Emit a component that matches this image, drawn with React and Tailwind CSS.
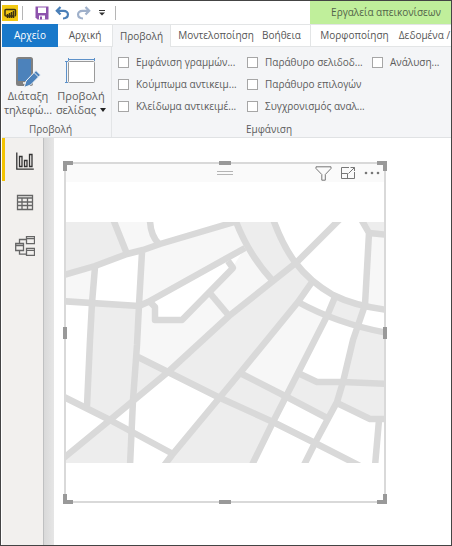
const TABS = [
  { id: 'home', label: 'Αρχική', style: 'w-[54px] shrink-0 border-b' },
  { id: 'view', label: 'Προβολή', style: 'w-[59px] shrink-0 border-x bg-[#f4f5f7]' },
  { id: 'modeling', label: 'Μοντελοποίηση', style: 'w-[90px] shrink-0 border-b' },
  { id: 'help', label: 'Βοήθεια', style: 'w-[49px] shrink-0 border-b pr-2' },
  { id: 'format', label: 'Μορφοποίηση', style: 'w-[88px] shrink-0 border-b border-l' },
  { id: 'data', label: 'Δεδομένα /', style: 'min-w-[53px] border-b' },
];

const SHOW_OPTIONS = [
  ['Εμφάνιση γραμμών...', 'Κούμπωμα αντικειμ...', 'Κλείδωμα αντικειμέ...'],
  ['Παράθυρο σελιδοδ...', 'Παράθυρο επιλογών', 'Συγχρονισμός αναλ...'],
  ['Ανάλυση...'],
];

/* City blocks, darker and lighter shade */
const DARK_BLOCKS = [
  '65,222 114,222 127,254 65,274',
  '92,303 139,305 137,340 133,400 110,420 87,405',
  '65,457 110,420 132,431 130,463 65,463',
  '138,357 168,372 134,400',
  '237,222 275,222 284,243 297,262 272,280 245,248',
  '168,372 229,316 297,262 310,280 298,302 240,373 218,398',
  '363,222 385,222 385,234 369,233',
  '335,297 363,305 356,327 327,316',
  '356,327 385,333 385,384 343,382',
  '298,373 317,382 343,382 337,402 327,418 287,397',
  '343,382 385,384 385,419 370,419 337,403',
  '240,373 287,397 273,422 220,398',
  '218,398 273,422 253,463 167,463',
];

const LIGHT_BLOCKS = [
  '114,222 150,222 151,233 159,244 127,254',
  '65,275 95,267 93,303 65,301',
  '142,252 237,222 245,248 148,302 139,305',
  '139,305 148,302 155,308 155,320 182,320 232,268 245,248 272,280 229,316 168,372 138,357',
  '369,233 385,234 385,310 365,305',
  '298,302 327,316 310,348 298,373 287,397 240,373',
];

const ROADS = [
  'M60 276 L95 266 L127 254 L143 250 L160 244 L238 221',
  'M113 219 L127 254',
  'M150 219 Q150 235 159 244',
  'M95 267 L92 303 L90 340 L87 406',
  'M142 252 L139 305 L137 345 L133 400 L130 466',
  'M60 301 L139 306 L148 302 L245 248',
  'M149 301 L155 307 L155 320 L182 320 L233 268 L228 261',
  'M209 292 L230 317',
  'M60 461 L110 420 L168 372 L229 316 L297 262 L340 219',
  'M235 219 Q248 254 272 280',
  'M273 219 C285 252 300 276 333 295 Q355 306 388 310',
  'M361 219 L369 233 L365 305 L353 340 L343 382 L337 402 L315 443 L303 467',
  'M369 233 L388 235',
  'M298 302 Q338 324 388 333',
  'M312 282 L298 302 L240 373 L172 455 L163 467',
  'M335 297 L327 316 L298 373 L273 422 L251 467',
  'M240 373 L287 397 L327 418',
  'M138 357 L168 372 L218 397 L273 422 L315 443 L362 467',
  'M298 373 L317 382 L343 382 L388 384',
  'M337 403 L370 419 L388 419',
  'M379 420 L375 466',
  'M60 395 L110 420 L173 454',
];

function QuickAccess() {
  return (
    <div className="flex h-full items-center">
      <span className="flex h-4 w-4 items-center justify-center bg-[#f2c811]">
        <svg viewBox="0 0 14 12" className="h-3 w-3.5">
          <path d="M10 9H3a1 1 0 0 1-1-1V3.500a1 1 0 0 1 1-1h8.500a1 1 0 0 1 1 1V8a1 1 0 0 1-1 1" fill="none" stroke="#3b3213" strokeWidth="1.500" />
          <path d="M4.500 11V7M6.500 11V6M8.500 11V5M10.500 11V4" stroke="#3b3213" strokeWidth="1.500" />
        </svg>
      </span>
      <span className="ml-1 h-3.5 w-px bg-[#b5b5b5]" />
      <button type="button" aria-label="Αποθήκευση" className="ml-3">
        <svg viewBox="0 0 14 14" className="h-3.5 w-3.5">
          <path d="M.5.500h13v13H2.500L.5 11.500z" fill="#8d53ad" />
          <path d="M3 1.500h8V7H3zM4 9.500h6v4H4z" fill="#fff" />
          <path d="M5 10.500h2v3H5z" fill="#8d53ad" />
        </svg>
      </button>
      <button type="button" aria-label="Αναίρεση" className="ml-1.5">
        <svg viewBox="0 0 15 14" className="h-3.5 w-[15px]" fill="none" stroke="#4a7fb8" strokeWidth="2.200">
          <path d="M5.500 1L1.800 4.800l3.700 3.700M2 4.800h6.500c6 0 6 7.500-.5 7.700" />
        </svg>
      </button>
      <button type="button" aria-label="Επανάληψη" className="ml-1.5">
        <svg viewBox="0 0 15 14" className="h-3.5 w-[15px]" fill="none" stroke="#9fb0ca" strokeWidth="2.200">
          <path d="M9.500 1l3.700 3.800-3.700 3.700M13 4.800H6.500c-6 0-6 7.500.5 7.700" />
        </svg>
      </button>
      <button type="button" aria-label="Προσαρμογή" className="ml-2">
        <svg viewBox="0 0 6 6" className="h-1.5 w-1.5">
          <path d="M0 .5h6" stroke="#333" />
          <path d="M0 2.500h6L3 5.500z" fill="#333" />
        </svg>
      </button>
      <span className="ml-2.5 h-3.5 w-px bg-[#b5b5b5]" />
    </div>
  );
}

function TitleBar() {
  return (
    <header className="flex h-[23px] items-center justify-between bg-white">
      <QuickAccess />
      <div className="flex h-full w-[141px] items-center justify-end bg-[#c0ef9b] pr-2.5 text-[10px] text-[#53634a]">
        Εργαλεία απεικονίσεων
      </div>
    </header>
  );
}

function TabStrip() {
  return (
    <nav className="flex h-[23px] bg-white text-[10px] text-[#555]">
      <button type="button" className="w-14 shrink-0 bg-[#1979ca] text-white">
        Αρχείο
      </button>
      {TABS.map((tab) => (
        <button
          key={tab.id}
          type="button"
          className={`flex items-center justify-center border-t border-[#e3e5e6] whitespace-nowrap last:flex-1 ${tab.style}`}
        >
          {tab.label}
        </button>
      ))}
    </nav>
  );
}

function Ribbon() {
  return (
    <section className="flex h-[91px] border-b border-[#e0e2e4] bg-[#f4f5f7] text-[10px] text-[#5c5c5c]">
      <div className="flex w-[110px] shrink-0 flex-col border-r border-[#e3e5e7] pt-2.5">
        <div className="flex text-[11px] leading-[14px]">
          <button type="button" className="flex w-[52px] flex-col items-center">
            <svg viewBox="0 0 26 32" className="h-8 w-[26px]">
              <rect x="2" y="1" width="15" height="27" rx="1.500" fill="#4c82bb" stroke="#808080" strokeWidth="2" />
              <path d="M2 24h15v4H2z" fill="#808080" />
              <path d="M8 26h3" stroke="#fff" strokeWidth="1.500" />
              <path d="M9 30.500l2-6.500L21 13.500l4.500 4.500-10 10z" fill="#4c82bb" stroke="#f4f5f7" />
              <path d="M19 15.500l4.500 4.500" stroke="#f4f5f7" />
            </svg>
            <span>Διάταξη</span>
            <span>τηλεφώ...</span>
          </button>
          <button type="button" className="flex w-[54px] flex-col items-center">
            <svg viewBox="0 0 32 32" className="h-8 w-8">
              <path d="M3 2.500h27M3.500 1v3M29.500 1v3M1.500 4v22M0 4.500h3M0 25.500h3" stroke="#5d91c9" />
              <rect x="3.500" y="4.500" width="26" height="21" rx="1" fill="#fff" stroke="#9a9a9a" />
            </svg>
            <span>Προβολή</span>
            <span className="flex items-center gap-1">
              σελίδας
              <svg viewBox="0 0 6 4" className="h-1 w-1.5">
                <path d="M0 0h6L3 4z" fill="#222" />
              </svg>
            </span>
          </button>
        </div>
        <div className="mt-auto pr-3 text-center">Προβολή</div>
      </div>

      <fieldset className="flex w-[330px] shrink-0 flex-col pt-1">
        <div className="grid grid-cols-[129px_125px_70px] pl-1.5">
          {SHOW_OPTIONS.map((column) => (
            <div key={column[0]}>
              {column.map((option) => (
                <label key={option} className="flex h-[22px] items-center gap-[7px] whitespace-nowrap">
                  <input
                    type="checkbox"
                    className="h-[11px] w-[11px] shrink-0 appearance-none border border-[#a6a6a6] bg-white"
                  />
                  {option}
                </label>
              ))}
            </div>
          ))}
        </div>
        <div className="mt-auto pr-4 text-center">Εμφάνιση</div>
      </fieldset>
    </section>
  );
}

function ViewRail() {
  return (
    <aside className="relative w-[42px] shrink-0 border-r border-[#bfc0c1] bg-[#f2f0ee]">
      <span className="absolute left-0 top-0 h-[43px] w-[3px] bg-[#f4c402]" />
      <div className="flex flex-col items-center gap-6 pl-1 pt-3.5 text-[#666]">
        <button type="button" aria-label="Αναφορά" className="text-[#333]">
          <svg viewBox="0 0 18 18" className="h-[18px] w-[18px]" fill="none" stroke="currentColor" strokeWidth="1.300">
            <path d="M.8.500v16.700h17M3.500 4.500h2.500v10H3.500zM8.500 8.500h2.500v6H8.500zM13.500 2.500H16v12h-2.500z" />
          </svg>
        </button>
        <button type="button" aria-label="Δεδομένα">
          <svg viewBox="0 0 18 18" className="h-[18px] w-[18px]" fill="none" stroke="currentColor">
            <path d="M1.500 1.500h15v14h-15zM1.500 4h15M1.500 8h15M1.500 11.500h15M6 4v11.500M11.500 4v11.500" strokeWidth="1.300" />
          </svg>
        </button>
        <button type="button" aria-label="Μοντέλο">
          <svg viewBox="0 0 20 20" className="h-5 w-5" fill="none" stroke="currentColor" strokeWidth="1.300">
            <path d="M.7 7.500h7.800v7H.7zM.7 9.500h7.800M11.500.700h8v7h-8zM11.500 2.700h8M11.500 12.300h8v7h-8zM11.500 14.300h8M4.500 7.500v-4h7M4.500 14.500v3.700h7" />
          </svg>
        </button>
      </div>
    </aside>
  );
}

function MapDrawing() {
  return (
    <svg viewBox="66 222 318 241" className="block w-full">
      {DARK_BLOCKS.map((points) => (
        <polygon key={points} points={points} fill="#ededed" />
      ))}
      {LIGHT_BLOCKS.map((points) => (
        <polygon key={points} points={points} fill="#f7f7f7" />
      ))}
      <g fill="none" stroke="#d9d9d9" strokeWidth="6.500" strokeLinejoin="round">
        {ROADS.map((road) => (
          <path key={road} d={road} />
        ))}
      </g>
    </svg>
  );
}

function ResizeHandles() {
  return (
    <>
      <span className="absolute -left-[3px] -top-[3px] h-2.5 w-2.5 border-l-4 border-t-4 border-[#999]" />
      <span className="absolute -right-[3px] -top-[3px] h-2.5 w-2.5 border-r-4 border-t-4 border-[#999]" />
      <span className="absolute -bottom-[3px] -left-[3px] h-2.5 w-2.5 border-b-4 border-l-4 border-[#999]" />
      <span className="absolute -bottom-[3px] -right-[3px] h-2.5 w-2.5 border-b-4 border-r-4 border-[#999]" />
      <span className="absolute -top-[3px] left-1/2 h-1 w-3 -translate-x-1/2 bg-[#999]" />
      <span className="absolute -bottom-[3px] left-1/2 h-1 w-3 -translate-x-1/2 bg-[#999]" />
      <span className="absolute -left-[3px] top-1/2 h-3 w-1 -translate-y-1/2 bg-[#999]" />
      <span className="absolute -right-[3px] top-1/2 h-3 w-1 -translate-y-1/2 bg-[#999]" />
    </>
  );
}

function MapVisual() {
  return (
    <article className="relative w-[322px] border-2 border-[#d9d9d9] pb-[38px]">
      <div className="flex h-[18px] items-center bg-[#fafafa] px-1 text-[#777]">
        <span className="flex-1" />
        <span className="h-1 w-4 border-y border-[#b5b5b5]" />
        <div className="flex flex-1 items-center justify-end gap-2">
          <button type="button" aria-label="Φίλτρο">
            <svg viewBox="0 0 17 15" className="h-[15px] w-[17px]" fill="none" stroke="currentColor">
              <path d="M1 .8h15v1.700L10.300 8.500v5.700H6.800V8.500L1 2.500z" />
            </svg>
          </button>
          <button type="button" aria-label="Εστίαση">
            <svg viewBox="0 0 16 14" className="h-3.5 w-4" fill="none" stroke="currentColor">
              <path d="M9 1.500H1.500v11h13V6M1.500 7.500h6v5M8.500 7.500l6-6M10.500 1.500h4V5" />
            </svg>
          </button>
          <button type="button" aria-label="Περισσότερα">
            <svg viewBox="0 0 16 4" className="h-1 w-4" fill="currentColor">
              <circle cx="2" cy="2" r="1.300" />
              <circle cx="8" cy="2" r="1.300" />
              <circle cx="14" cy="2" r="1.300" />
            </svg>
          </button>
        </div>
      </div>
      <div className="pt-10">
        <MapDrawing />
      </div>
      <ResizeHandles />
    </article>
  );
}

export default function App() {
  return (
    <div className="flex min-h-screen flex-col border border-[#444] bg-white pl-px font-['Open_Sans','Noto_Sans',sans-serif]">
      <TitleBar />
      <TabStrip />
      <Ribbon />
      <div className="flex flex-1">
        <ViewRail />
        <div className="w-2.5 shrink-0 bg-linear-to-r from-[#d9d9d9] to-[#e6e6e6]" />
        <main className="flex-1 pl-2.5 pt-6">
          <MapVisual />
        </main>
      </div>
    </div>
  );
}
